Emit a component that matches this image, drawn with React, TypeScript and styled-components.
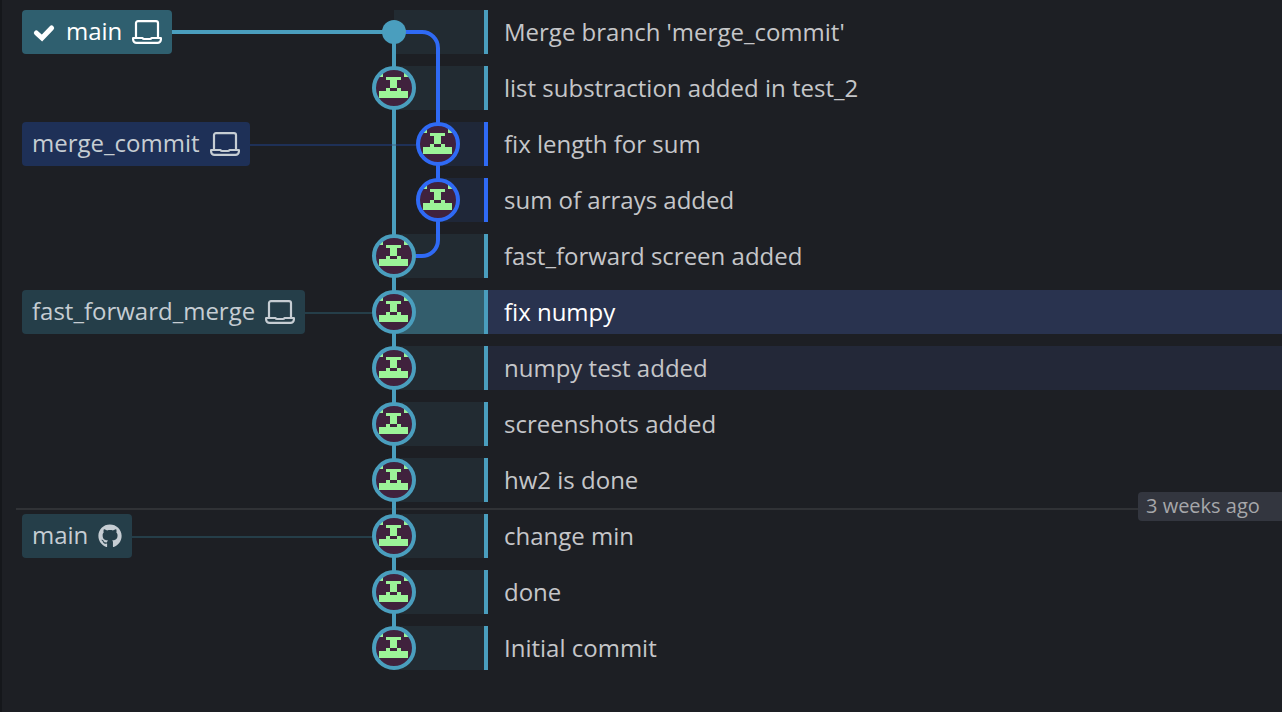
import React from "react";
import styled, { createGlobalStyle, css } from "styled-components";
import { FaGithub } from "react-icons/fa";

const TEAL = "#4a9ebe";
const BLUE = "#2f6af5";

const ROW = 44;
const GAP = 12;
const STEP = ROW + GAP;
const LANE_X = [22, 66];

const GlobalStyle = createGlobalStyle`
  * { box-sizing: border-box; }
  body {
    margin: 0;
    background: #1d1f24;
    color: #c5c6c9;
    font-family: "Open Sans", "Noto Sans", sans-serif;
  }
`;

type Host = "local" | "github";
type Tone = "current" | "teal" | "blue";
type RowState = "selected" | "hovered" | undefined;

interface Commit {
  message: string;
  lane: 0 | 1;
  merge?: boolean;
  state?: RowState;
  branch?: { name: string; tone: Tone; host: Host };
  age?: string;
}

const commits: Commit[] = [
  { message: "Merge branch 'merge_commit'", lane: 0, merge: true, branch: { name: "main", tone: "current", host: "local" } },
  { message: "list substraction added in test_2", lane: 0 },
  { message: "fix length for sum", lane: 1, branch: { name: "merge_commit", tone: "blue", host: "local" } },
  { message: "sum of arrays added", lane: 1 },
  { message: "fast_forward screen added", lane: 0 },
  { message: "fix numpy", lane: 0, state: "selected", branch: { name: "fast_forward_merge", tone: "teal", host: "local" } },
  { message: "numpy test added", lane: 0, state: "hovered" },
  { message: "screenshots added", lane: 0 },
  { message: "hw2 is done", lane: 0 },
  { message: "change min", lane: 0, age: "3 weeks ago", branch: { name: "main", tone: "teal", host: "github" } },
  { message: "done", lane: 0 },
  { message: "Initial commit", lane: 0 },
];

const chipColor = { current: "#2f5f6f", teal: "#253e49", blue: "#1e3057" };

const Panel = styled.main`
  position: relative;
  min-height: 100vh;
  padding: 10px 0 42px;
  border-left: 2px solid #15171b;
  overflow: hidden;
`;

const CommitList = styled.ol`
  display: flex;
  flex-direction: column;
  gap: ${GAP}px;
  margin: 0;
  padding: 0;
  list-style: none;
`;

const CommitRow = styled.li`
  position: relative;
  display: flex;
  height: ${ROW}px;
  padding-left: 20px;
`;

const Refs = styled.div<{ $lane: number }>`
  display: flex;
  align-items: center;
  flex: none;
  width: ${(p) => (p.$lane ? 416 : 372)}px;
`;

const Chip = styled.button<{ $tone: Tone }>`
  display: flex;
  align-items: center;
  gap: 10px;
  height: ${ROW}px;
  padding: 0 10px;
  border: 0;
  border-radius: 4px;
  background: ${(p) => chipColor[p.$tone]};
  color: ${(p) => (p.$tone === "current" ? "#ffffff" : "#c6cdd3")};
  font: inherit;
  font-size: 24px;
  line-height: 42px;
  white-space: nowrap;
  cursor: pointer;

  svg { flex: none; }
`;

const ChipName = styled.span`
  padding-bottom: 2px;
`;

const Connector = styled.span<{ $tone: Tone }>`
  flex: 1;
  align-self: flex-end;
  ${(p) =>
    p.$tone === "current"
      ? css`height: 24px; border-top: 4px solid ${TEAL};`
      : css`height: 22px; border-top: 2px solid ${chipColor[p.$tone]};`}
`;

const LaneBand = styled.div<{ $lane: number; $state: RowState }>`
  flex: none;
  width: ${(p) => (p.$lane ? 50 : 94)}px;
  border-right: 4px solid ${(p) => (p.$lane ? BLUE : TEAL)};
  background: ${(p) => (p.$state === "selected" ? "#335d6c" : p.$lane ? "#1f2738" : "#222b32")};
`;

const Message = styled.div<{ $state: RowState }>`
  flex: 1;
  min-width: 0;
  padding-left: 16px;
  overflow: hidden;
  color: ${(p) => (p.$state === "selected" ? "#ffffff" : "inherit")};
  background: ${(p) =>
    p.$state === "selected" ? "#29334f" : p.$state === "hovered" ? "#232838" : "transparent"};
  font-size: 24px;
  line-height: 44px;
  white-space: nowrap;
  text-overflow: ellipsis;
`;

const AgeDivider = styled.div`
  position: absolute;
  top: -22px;
  left: 14px;
  right: 0;
  display: flex;
  align-items: flex-start;

  &::before {
    content: "";
    flex: 1;
    height: 16px;
    border-bottom: 2px solid #303236;
  }
`;

const AgeLabel = styled.span`
  width: 144px;
  padding: 0 0 2px 8px;
  border-radius: 4px 0 0 4px;
  background: #33363f;
  color: #a6a7aa;
  font-size: 20px;
  line-height: 27px;
  white-space: nowrap;
`;

const Graph = styled.svg`
  position: absolute;
  top: 10px;
  left: 370px;
  pointer-events: none;
`;

const CheckIcon = () => (
  <svg width="24" height="24" viewBox="0 0 24 24" aria-hidden="true">
    <path
      d="M4.4 13 10 18 19.6 8"
      fill="none"
      stroke="currentColor"
      strokeWidth="5"
      strokeLinecap="round"
      strokeLinejoin="miter"
    />
  </svg>
);

const LaptopIcon = () => (
  <svg width="30" height="24" viewBox="0 0 30 24" fill="none" stroke="currentColor" strokeWidth="2.2" aria-hidden="true">
    <path d="M4 17V3.100a2 2 0 0 1 2-2h18a2 2 0 0 1 2 2V17" />
    <path
      d="M1.100 18H10.500q.5 1 1.500 1h6q1 0 1.500-1h9.400v1.500a3.400 3.400 0 0 1-3.400 3.400h-21a3.400 3.400 0 0 1-3.400-3.400z"
      strokeLinejoin="round"
    />
  </svg>
);

const Avatar = ({ x, y, color }: { x: number; y: number; color: string }) => (
  <g transform={`translate(${x} ${y})`}>
    <circle r="20" fill="#40223d" />
    <path
      fill="#9cf398"
      shapeRendering="crispEdges"
      d="M-15-15h4v4h-4zM10-15h4v4h-4zM-8-11H7v3H3V0H7V3H14V10H-15V3H-8V0H-4V-8H-8zM-4 0V3H3V0z"
      fillRule="evenodd"
    />
    <circle r="20" fill="none" stroke={color} strokeWidth="4" />
  </g>
);

const rowY = (i: number) => i * STEP + ROW / 2;

const CommitGraph = () => (
  <Graph width="88" height={commits.length * STEP} aria-hidden="true">
    <g fill="none" strokeWidth="4">
      <path stroke={TEAL} d={`M22 ${rowY(0)}V${rowY(11)}`} />
      <path stroke="#45819f" strokeWidth="2" d={`M20 ${rowY(2) + 1}h4`} />
      <path stroke={BLUE} d={`M22 ${rowY(0)}H50a16 16 0 0 1 16 16V${rowY(4) - 16}a16 16 0 0 1-16 16H22`} />
    </g>
    {commits.map((c, i) => {
      const color = c.lane ? BLUE : TEAL;
      return c.merge ? (
        <circle key={i} cx={LANE_X[c.lane]} cy={rowY(i)} r="12" fill={color} />
      ) : (
        <Avatar key={i} x={LANE_X[c.lane]} y={rowY(i)} color={color} />
      );
    })}
  </Graph>
);

export default function App() {
  return (
    <>
      <GlobalStyle />
      <Panel>
        <CommitList>
          {commits.map((c, i) => (
            <CommitRow key={i}>
              {c.age && (
                <AgeDivider>
                  <AgeLabel>{c.age}</AgeLabel>
                </AgeDivider>
              )}
              <Refs $lane={c.lane}>
                {c.branch && (
                  <>
                    <Chip type="button" $tone={c.branch.tone}>
                      {c.branch.tone === "current" && <CheckIcon />}
                      <ChipName>{c.branch.name}</ChipName>
                      {c.branch.host === "github" ? <FaGithub size={24} aria-hidden="true" /> : <LaptopIcon />}
                    </Chip>
                    <Connector $tone={c.branch.tone} />
                  </>
                )}
              </Refs>
              <LaneBand $lane={c.lane} $state={c.state} />
              <Message $state={c.state}>{c.message}</Message>
            </CommitRow>
          ))}
        </CommitList>
        <CommitGraph />
      </Panel>
    </>
  );
}
